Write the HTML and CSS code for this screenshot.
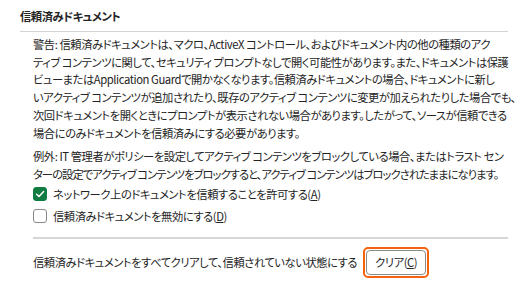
FILE: index.html
```html
<!DOCTYPE html>
<html lang="ja">
<head>
    <meta charset="UTF-8">
    <meta name="viewport" content="width=device-width, initial-scale=1.0">
    <title>信頼済みドキュメント</title>
    <link rel="stylesheet" href="styles.css">
</head>
<body>
    <section class="pane">
        <h2 class="pane-title">信頼済みドキュメント</h2>
        <div class="pane-body">
            <p class="note">警告: 信頼済みドキュメントは、マクロ、ActiveX コントロール、およびドキュメント内の他の種類のアク<br>ティブ コンテンツに関して、セキュリティ プロンプトなしで開く可能性があります。また、ドキュメントは保護<br>ビューまたはApplication Guardで開かなくなります。信頼済みドキュメントの場合、ドキュメントに新し<br>いアクティブ コンテンツが追加されたり、既存のアクティブ コンテンツに変更が加えられたりした場合でも、<br>次回ドキュメントを開くときにプロンプトが表示されない場合があります。したがって、ソースが信頼できる<br>場合にのみドキュメントを信頼済みにする必要があります。</p>
            <p class="note">例外: IT 管理者がポリシーを設定してアクティブ コンテンツをブロックしている場合、またはトラスト セン<br><span class="tight">ターの設定でアクティブ コンテンツをブロックすると、アクティブ コンテンツはブロックされたままになります。</span></p>

            <label class="check">
                <span class="box box-on">
                    <svg width="10" height="10" viewBox="0 0 10 10"><path d="M1.6 5.2 L4 7.5 L8.6 2.6" fill="none" stroke="#fff" stroke-width="1.5" stroke-linecap="round" stroke-linejoin="round"/></svg>
                </span>
                <span>ネットワーク上のドキュメントを信頼することを許可する(<u>A</u>)</span>
            </label>
            <label class="check">
                <span class="box"></span>
                <span>信頼済みドキュメントを無効にする(<u>D</u>)</span>
            </label>

            <div class="clear-row">
                <span>信頼済みドキュメントをすべてクリアして、信頼されていない状態にする</span>
                <span class="focus-ring"><button class="btn">クリア(<u>C</u>)</button></span>
            </div>
        </div>
    </section>
</body>
</html>
```

FILE: styles.css
```css
body {
    margin: 0;
    background-color: #fff;
    color: #242424;
    font-family: "Noto Sans CJK JP", "Noto Sans", sans-serif;
    font-size: 11.3px;
    letter-spacing: -0.45px;
    font-feature-settings: "palt";
}

.pane {
    padding: 8px 12px 0 20px;
}

.pane-title {
    margin: 0;
    font-size: 11.3px;
    font-weight: 600;
    line-height: 16px;
    padding-bottom: 7px;
    border-bottom: 1px solid #d4d4d4;
}

.pane-body {
    padding: 4px 0 0 13px;
}

.note {
    margin: 0 0 6px;
    line-height: 17.7px;
    white-space: nowrap;
}

.note + .note {
    margin-bottom: 0;
}

/* katakana-heavy line runs long in this font */
.tight {
    letter-spacing: -0.95px;
}

.check {
    display: flex;
    align-items: center;
    gap: 6px;
    height: 20px;
    margin-bottom: 2px;
}

.box {
    display: flex;
    align-items: center;
    justify-content: center;
    width: 12px;
    height: 12px;
    border: 1px solid #8a8a8a;
    border-radius: 3px;
    background-color: #fff;
}

.box-on {
    background-color: #107c41;
    border-color: #107c41;
}

.clear-row {
    display: flex;
    align-items: center;
    gap: 6px;
    margin-top: 11px;
    padding-top: 8px;
    border-top: 2px solid #d6d6d6;
}

.focus-ring {
    display: inline-flex;
    padding: 1px;
    border: 2px solid #f7630c;
    border-radius: 5px;
}

.btn {
    height: 25px;
    padding: 0 8px;
    border: 1px solid #8a8a8a;
    border-radius: 4px;
    background-color: #fff;
    color: #242424;
    font-family: inherit;
    font-size: 11.3px;
    letter-spacing: -0.45px;
    font-feature-settings: "palt";
}
```
